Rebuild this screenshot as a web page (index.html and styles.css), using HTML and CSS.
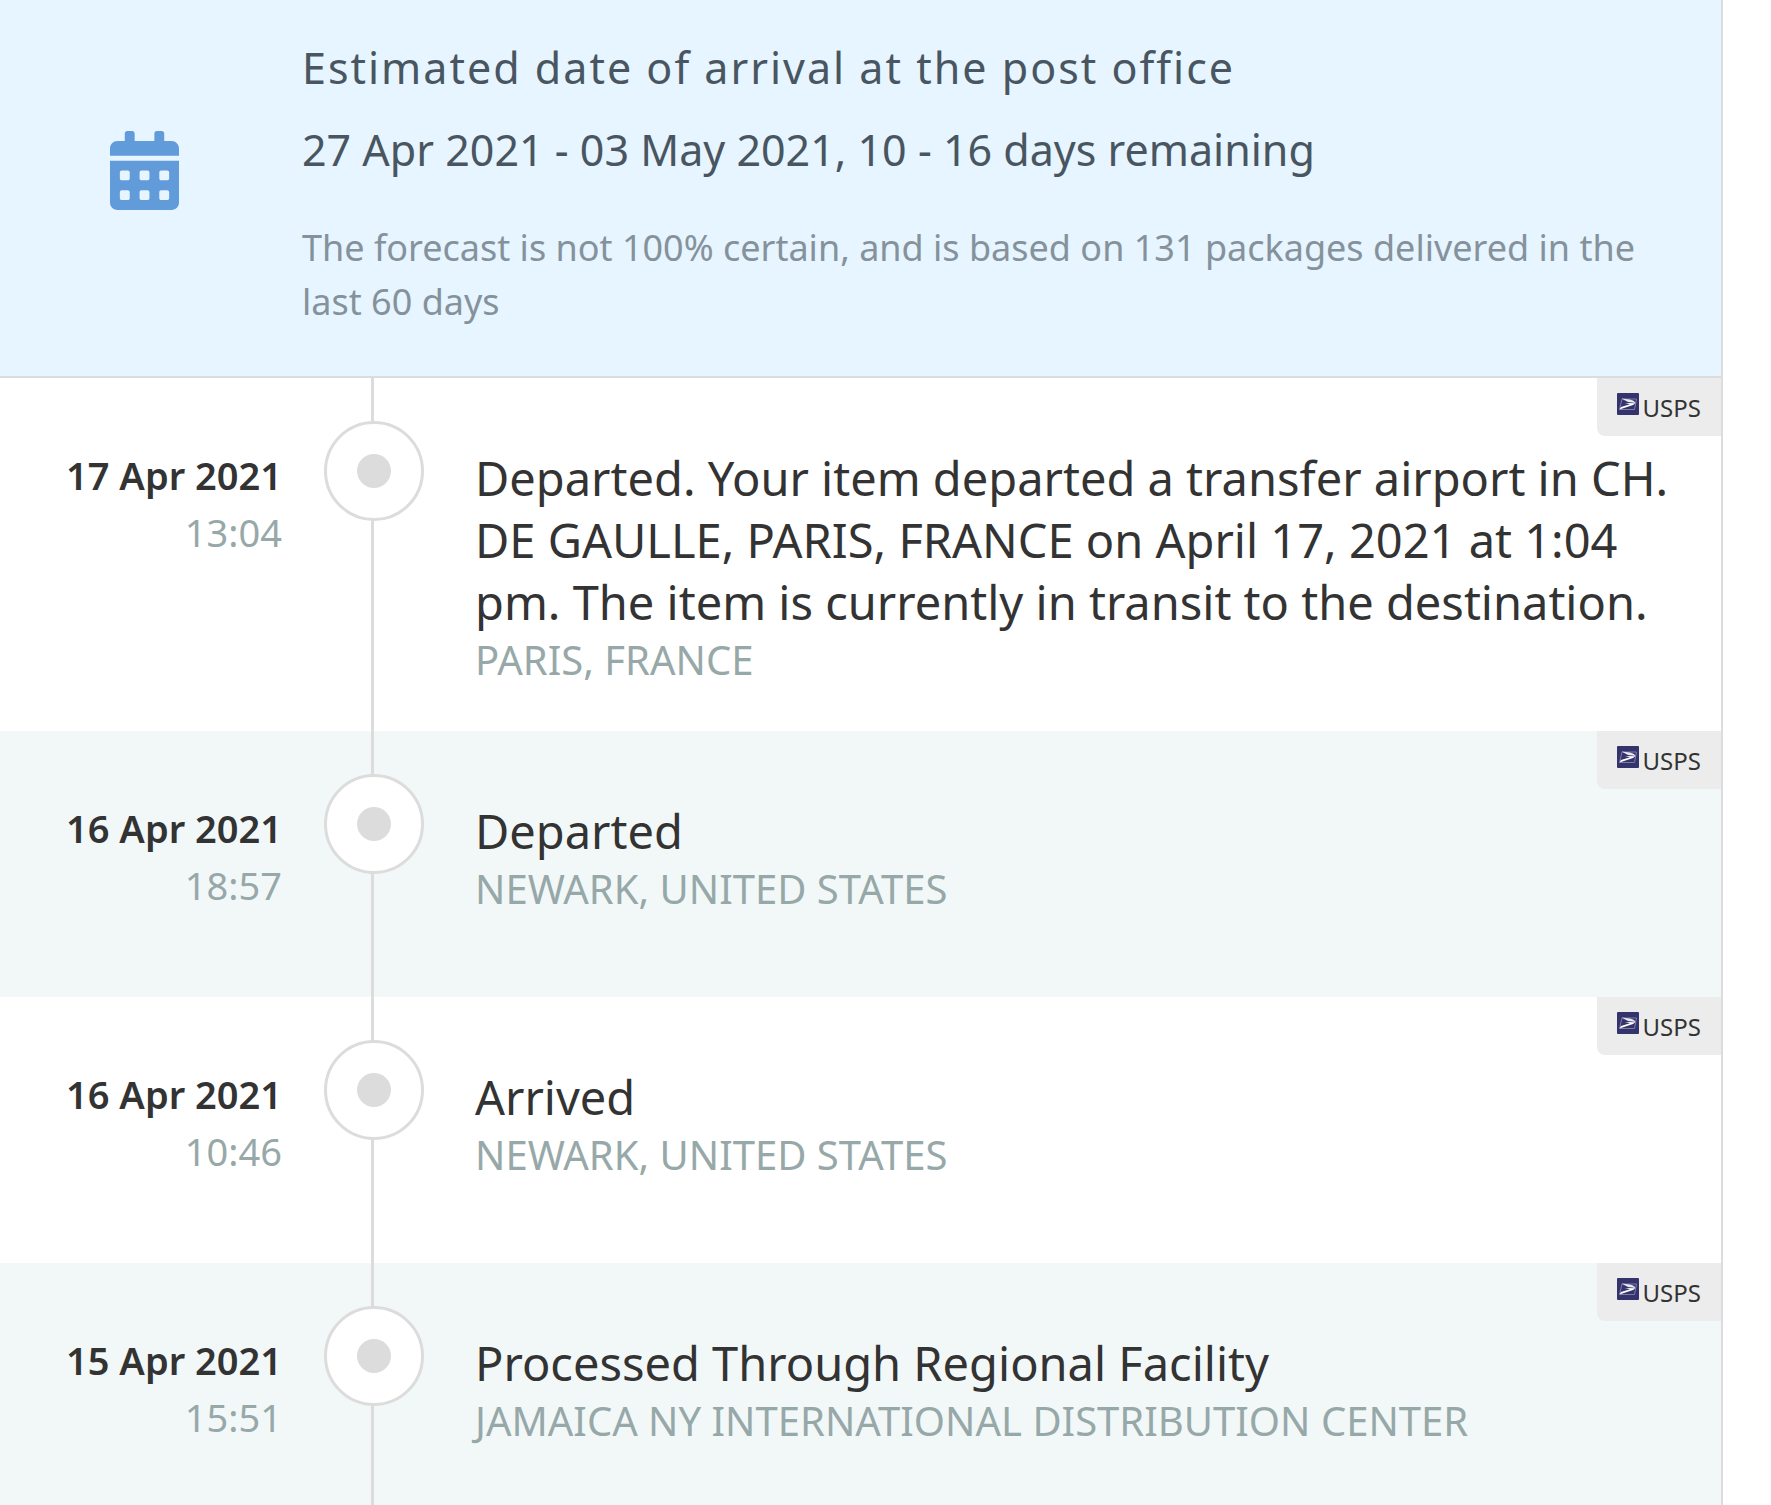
FILE: index.html
```html
<!DOCTYPE html>
<html lang="en">
<head>
<meta charset="utf-8">
<meta name="viewport" content="width=device-width, initial-scale=1">
<title>Package tracking</title>
<link rel="stylesheet" href="styles.css">
</head>
<body>
<svg class="sprite" aria-hidden="true">
  <symbol id="usps" viewBox="0 0 22 22">
    <rect width="22" height="22" rx="1" fill="#35336b"/>
    <path d="M5 6H19.500L17.500 16.500H2.500Z" fill="none" stroke="#7d7ca8"/>
    <path d="M4.500 5.500L13 6.500C16.500 7.500 18 8.500 18.500 10L11 9Z" fill="#e6e6ef"/>
    <path d="M8 10L18.500 10.200L16 12L2.500 16.500L4 14L13 11.200Z" fill="#fff"/>
  </symbol>
</svg>
<main class="panel">
  <section class="estimate">
    <svg class="calendar" viewBox="0 0 448 512" aria-hidden="true"><path d="M0 464c0 26.500 21.500 48 48 48h352c26.500 0 48-21.500 48-48V192H0v272zm320-196c0-6.600 5.400-12 12-12h40c6.600 0 12 5.400 12 12v40c0 6.600-5.400 12-12 12h-40c-6.600 0-12-5.400-12-12v-40zm0 128c0-6.600 5.400-12 12-12h40c6.600 0 12 5.400 12 12v40c0 6.600-5.400 12-12 12h-40c-6.600 0-12-5.400-12-12v-40zM192 268c0-6.600 5.400-12 12-12h40c6.600 0 12 5.400 12 12v40c0 6.600-5.400 12-12 12h-40c-6.600 0-12-5.400-12-12v-40zm0 128c0-6.600 5.400-12 12-12h40c6.600 0 12 5.400 12 12v40c0 6.600-5.400 12-12 12h-40c-6.600 0-12-5.400-12-12v-40zM64 268c0-6.600 5.400-12 12-12h40c6.600 0 12 5.400 12 12v40c0 6.600-5.400 12-12 12H76c-6.600 0-12-5.400-12-12v-40zm0 128c0-6.600 5.400-12 12-12h40c6.600 0 12 5.400 12 12v40c0 6.600-5.400 12-12 12H76c-6.600 0-12-5.400-12-12v-40zM400 64h-48V16c0-8.800-7.200-16-16-16h-32c-8.800 0-16 7.200-16 16v48H160V16c0-8.800-7.200-16-16-16h-32c-8.800 0-16 7.200-16 16v48H48C21.500 64 0 85.500 0 112v48h448v-48c0-26.500-21.500-48-48-48z"/></svg>
    <div class="estimate-text">
      <h1 class="title">Estimated date of arrival at the post office</h1>
      <p class="range">27 Apr 2021 - 03 May 2021, 10 - 16 days remaining</p>
      <p class="note">The forecast is not 100% certain, and is based on 131 packages delivered in the last 60 days</p>
    </div>
  </section>
  <ol class="events">
    <li class="event">
      <div class="when"><div class="date">17 Apr 2021</div><div class="time">13:04</div></div>
      <div class="track"><span class="marker"></span></div>
      <div class="what"><div class="status">Departed. Your item departed a transfer airport in CH. DE GAULLE, PARIS, FRANCE on April 17, 2021 at 1:04 pm. The item is currently in transit to the destination.</div><div class="place">PARIS, FRANCE</div></div>
      <div class="carrier"><svg class="logo" aria-hidden="true"><use href="#usps"/></svg>USPS</div>
    </li>
    <li class="event">
      <div class="when"><div class="date">16 Apr 2021</div><div class="time">18:57</div></div>
      <div class="track"><span class="marker"></span></div>
      <div class="what"><div class="status">Departed</div><div class="place">NEWARK, UNITED STATES</div></div>
      <div class="carrier"><svg class="logo" aria-hidden="true"><use href="#usps"/></svg>USPS</div>
    </li>
    <li class="event">
      <div class="when"><div class="date">16 Apr 2021</div><div class="time">10:46</div></div>
      <div class="track"><span class="marker"></span></div>
      <div class="what"><div class="status">Arrived</div><div class="place">NEWARK, UNITED STATES</div></div>
      <div class="carrier"><svg class="logo" aria-hidden="true"><use href="#usps"/></svg>USPS</div>
    </li>
    <li class="event">
      <div class="when"><div class="date">15 Apr 2021</div><div class="time">15:51</div></div>
      <div class="track"><span class="marker"></span></div>
      <div class="what"><div class="status">Processed Through Regional Facility</div><div class="place">JAMAICA NY INTERNATIONAL DISTRIBUTION CENTER</div></div>
      <div class="carrier"><svg class="logo" aria-hidden="true"><use href="#usps"/></svg>USPS</div>
    </li>
  </ol>
</main>
</body>
</html>
```
FILE: styles.css
```css
* {
  box-sizing: border-box;
}

html {
  scrollbar-width: none;
}

body {
  margin: 0;
  background: #fff;
  color: #333;
  font-family: "Noto Sans", sans-serif;
}

.sprite {
  display: none;
}

.panel {
  margin-right: 48px;
  border-right: 2px solid #dadcde;
}

.estimate {
  display: grid;
  grid-template-columns: 302px 1fr;
  padding: 38px 60px 47px 0;
  background: #e6f5ff;
  border-bottom: 2px solid #dadcde;
  color: #495560;
}

.calendar {
  width: 69px;
  height: 79px;
  margin: 93px 0 0 110px;
  fill: #629bda;
}

.title,
.range,
.note {
  margin: 0;
  font-size: 43px;
  font-weight: 400;
  line-height: 60px;
}

.title {
  margin-bottom: 22px;
  letter-spacing: 2px;
}

.range {
  margin-bottom: 41px;
}

.note {
  color: #85929b;
  font-size: 36px;
  line-height: 54px;
}

.events {
  margin: 0;
  padding: 0;
  list-style: none;
}

.event {
  position: relative;
  display: grid;
  grid-template-columns: 282px 182px 1fr;
  min-height: 266px;
  padding-right: 48px;
}

.event:nth-child(even) {
  background: #f2f8f8;
}

.when {
  padding-top: 69px;
  font-size: 38px;
  line-height: 57px;
  text-align: right;
}

.date {
  font-weight: 600;
}

.time,
.place {
  color: #97a8a9;
}

.track {
  padding: 43px 0 0 42px;
  background: linear-gradient(#dcdcdc, #dcdcdc) 89px 0 / 3px 100% no-repeat;
}

.marker {
  display: flex;
  align-items: center;
  justify-content: center;
  width: 100px;
  height: 100px;
  border: 3px solid #dcdcdc;
  border-radius: 50%;
  background: #fff;
}

.marker::before {
  content: "";
  width: 34px;
  height: 34px;
  border-radius: 50%;
  background: #dcdcdc;
}

.what {
  padding: 69px 0 45px 11px;
}

.status {
  font-size: 47px;
  line-height: 62px;
}

.place {
  font-size: 40px;
  line-height: 53px;
}

.carrier {
  position: absolute;
  top: 0;
  right: 0;
  display: flex;
  align-items: center;
  gap: 4px;
  height: 58px;
  padding: 0 20px;
  border-bottom-left-radius: 8px;
  background: #ececec;
  font-size: 24px;
}

.logo {
  width: 22px;
  height: 22px;
  margin-bottom: 6px;
}
```
